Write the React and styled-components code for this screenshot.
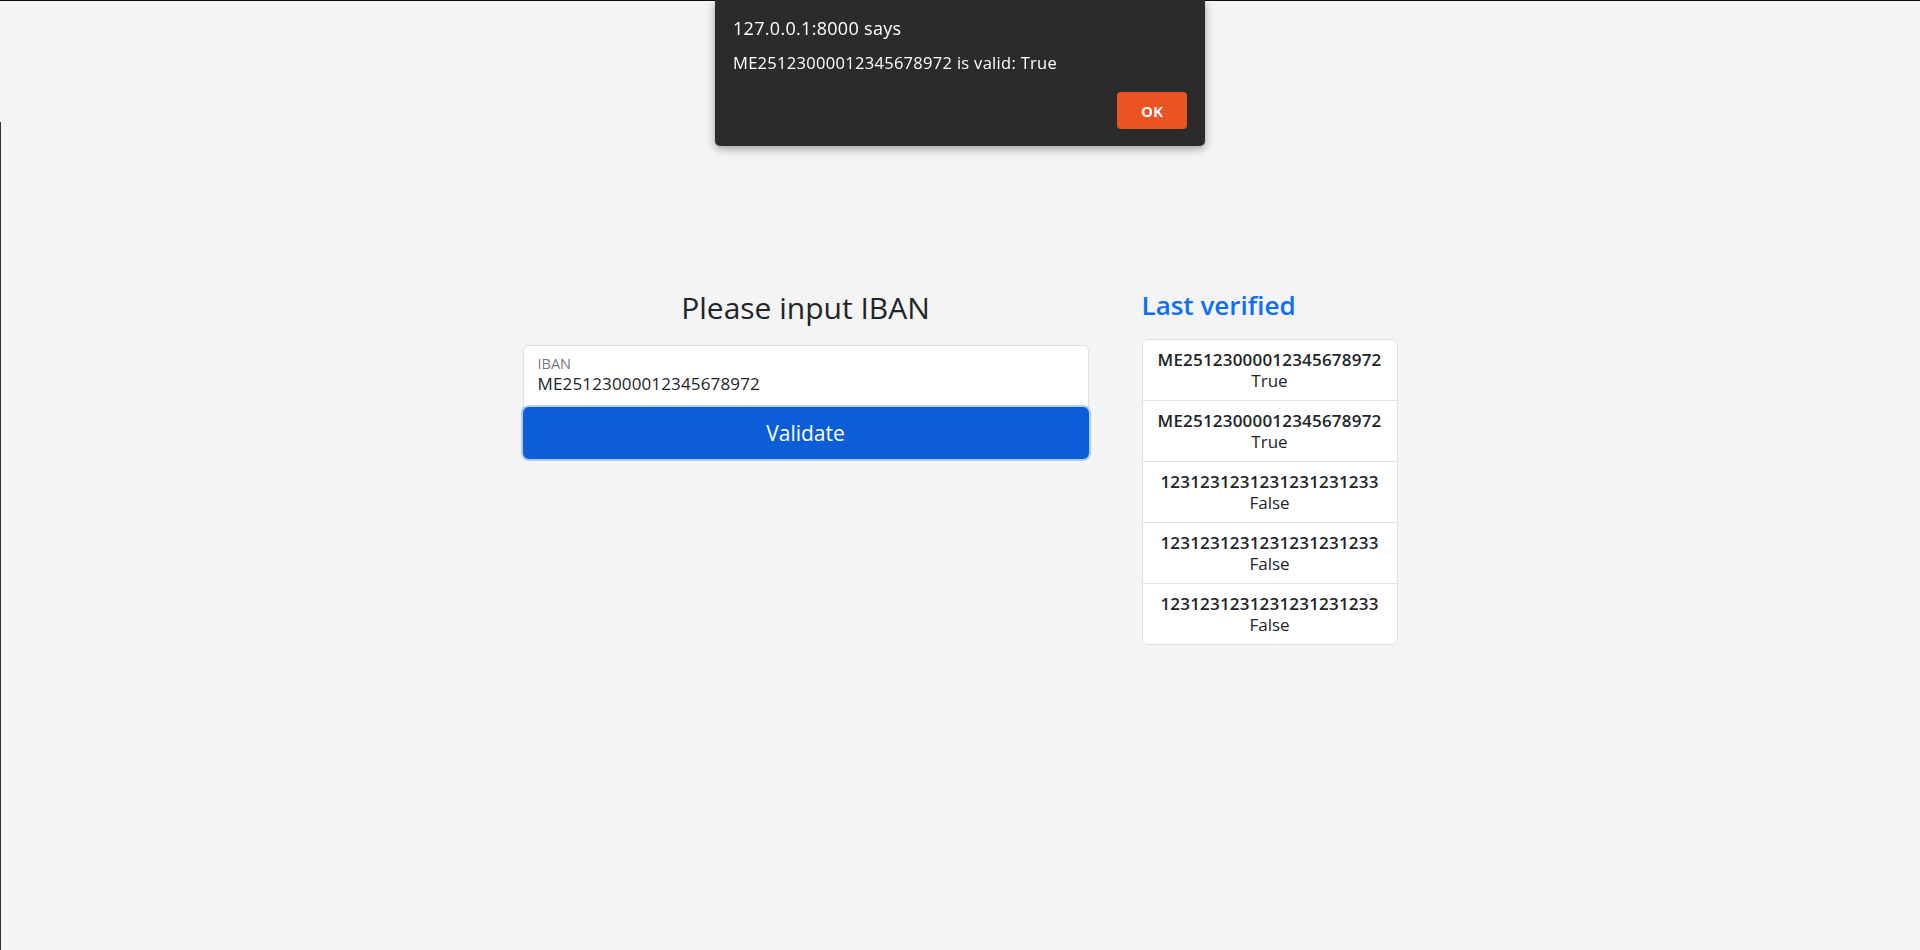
import React from 'react';
import styled, { createGlobalStyle } from 'styled-components';

const history = [
  { iban: 'ME25123000012345678972', valid: 'True' },
  { iban: 'ME25123000012345678972', valid: 'True' },
  { iban: '1231231231231231231233', valid: 'False' },
  { iban: '1231231231231231231233', valid: 'False' },
  { iban: '1231231231231231231233', valid: 'False' },
];

const App = () => {
  return (
    <Page>
      <GlobalStyle />

      {/* main content */}
      <Main>
        <FormColumn>
          <Heading>Please input IBAN</Heading>
          <Field>
            <FieldLabel htmlFor="iban">IBAN</FieldLabel>
            <FieldInput id="iban" type="text" defaultValue="ME25123000012345678972" />
          </Field>
          <ValidateButton type="button">Validate</ValidateButton>
        </FormColumn>

        <HistoryColumn>
          <HistoryTitle>Last verified</HistoryTitle>
          <List>
            {history.map((item, i) => (
              <Item key={i}>
                <Iban>{item.iban}</Iban>
                <span>{item.valid}</span>
              </Item>
            ))}
          </List>
        </HistoryColumn>
      </Main>

      {/* browser alert */}
      <Alert>
        <AlertTitle>127.0.0.1:8000 says</AlertTitle>
        <AlertText>ME25123000012345678972 is valid: True</AlertText>
        <AlertActions>
          <OkButton type="button">OK</OkButton>
        </AlertActions>
      </Alert>
    </Page>
  );
};

export default App;

const GlobalStyle = createGlobalStyle`
  * { box-sizing: border-box; }
  body {
    margin: 0;
    background: #f4f4f4;
    color: #212529;
    font-family: "Open Sans", "Noto Sans", sans-serif;
  }
`;

const Page = styled.div`
  position: relative;
  min-height: 950px;
  border-top: 1px solid #111;

  &::before {
    content: "";
    position: absolute;
    left: 0;
    top: 121px;
    bottom: 0;
    width: 1px;
    background: #333;
  }
`;

const Main = styled.main`
  display: flex;
  justify-content: center;
  align-items: flex-start;
  gap: 53px;
  padding-top: 289px;
`;

const FormColumn = styled.section`
  width: 566px;
  display: flex;
  flex-direction: column;
`;

const Heading = styled.h2`
  margin: 0 0 19px;
  font-size: 30px;
  font-weight: 400;
  line-height: 36px;
  text-align: center;
`;

const Field = styled.div`
  height: 63px;
  display: flex;
  flex-direction: column;
  padding: 9px 14px 0;
  background: #fff;
  border: 1px solid #dee2e6;
  border-radius: 6px 6px 0 0;
`;

const FieldLabel = styled.label`
  font-size: 14.5px;
  line-height: 17px;
  color: rgba(33, 37, 41, 0.65);
`;

const FieldInput = styled.input`
  border: none;
  outline: none;
  padding: 0;
  margin-top: 1px;
  background: transparent;
  font-family: inherit;
  font-size: 17px;
  letter-spacing: 0.15px;
  line-height: 22px;
  color: #212529;
`;

const ValidateButton = styled.button`
  height: 52px;
  margin-top: -1px;
  border: none;
  border-radius: 6px;
  background: #0b5ed7;
  color: #fff;
  font-family: inherit;
  font-size: 21px;
  box-shadow: 0 0 0 2px rgba(13, 110, 253, 0.3);
`;

const HistoryColumn = styled.aside`
  width: 256px;
  display: flex;
  flex-direction: column;
`;

const HistoryTitle = styled.h3`
  margin: 0 0 19px;
  font-size: 26px;
  font-weight: 600;
  line-height: 30px;
  color: #0d6efd;
`;

const List = styled.ul`
  margin: 0;
  padding: 0;
  list-style: none;
  background: #fff;
  border: 1px solid #dee2e6;
  border-radius: 6px;
  overflow: hidden;
`;

const Item = styled.li`
  display: flex;
  flex-direction: column;
  align-items: center;
  padding: 9px 10px;
  font-size: 17px;
  line-height: 21px;
  border-top: 1px solid #dee2e6;

  &:first-child { border-top: none; }
`;

const Iban = styled.span`
  font-weight: 600;
  letter-spacing: 0.2px;
`;

const Alert = styled.div`
  position: fixed;
  top: 0;
  left: 50%;
  transform: translateX(-50%);
  width: 490px;
  height: 146px;
  padding: 16px 18px 17px;
  display: flex;
  flex-direction: column;
  background: #2b2b2b;
  color: #fff;
  border-radius: 0 0 5px 5px;
  box-shadow: 0 3px 8px rgba(0, 0, 0, 0.35);
`;

const AlertTitle = styled.div`
  font-size: 18px;
  letter-spacing: 0.3px;
  line-height: 24px;
`;

const AlertText = styled.div`
  margin-top: 13px;
  font-size: 16.5px;
  letter-spacing: 0.3px;
  line-height: 20px;
`;

const AlertActions = styled.div`
  margin-top: auto;
  display: flex;
  justify-content: flex-end;
`;

const OkButton = styled.button`
  width: 70px;
  height: 37px;
  border: none;
  border-radius: 4px;
  background: #e95420;
  color: #fff;
  font-family: inherit;
  font-size: 15px;
  font-weight: 700;
`;
